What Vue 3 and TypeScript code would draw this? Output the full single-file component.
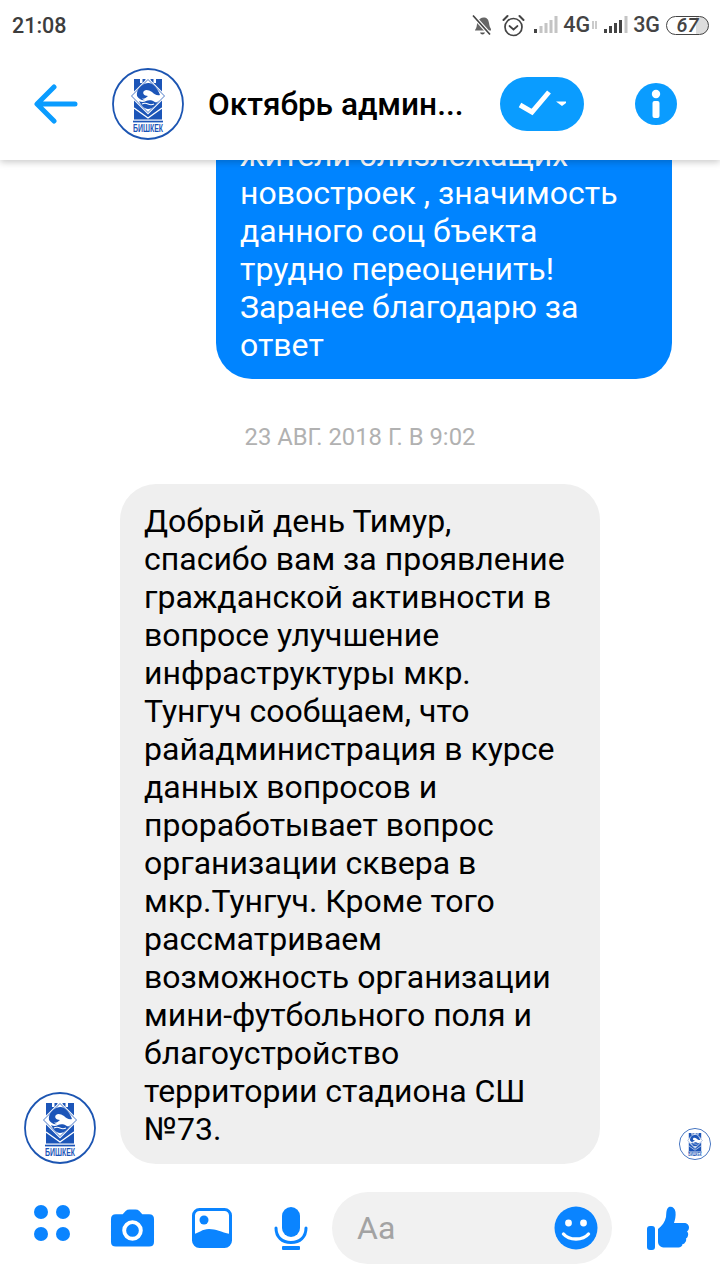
<template>
  <div class="screen">
    <header class="top">
      <div class="status">
        <span class="time">21:08</span>
        <div class="status-icons">
          <svg class="st bell" width="24" height="23" viewBox="0 0 24 23" fill="none">
            <path d="M5 16c2-2 1.500-5 2.500-8S12 3 14.500 3.500c3.500.7 4 3 4.500 5.500.3 2.500 1 4.500 2 6v1.500H5z" fill="#666" />
            <path d="M10 18.500a2.600 2.600 0 0 0 5 0z" fill="#555" />
            <path d="M3 1.500l17 19" stroke="#fff" stroke-width="4" />
            <path d="M3 1.500l17 19" stroke="#444" stroke-width="1.700" />
          </svg>
          <svg class="st alarm" width="23" height="23" viewBox="0 0 23 23" fill="none" stroke="#444" stroke-width="1.700">
            <circle cx="11.500" cy="13" r="8.500" />
            <path d="M7.500 12l4 3.500 4-3.500" stroke-linecap="round" />
            <path d="M1.500 6l4-4M21.500 6l-4-4" stroke-width="2" stroke-linecap="round" />
          </svg>
          <svg class="st sig1" width="26" height="20" viewBox="0 0 26 20">
            <rect x="1" y="14" width="3" height="4" fill="#444" />
            <rect x="6.500" y="11" width="3" height="7" fill="#c4c4c4" />
            <rect x="11.500" y="8" width="3" height="10" fill="#c4c4c4" />
            <rect x="16.500" y="5" width="3" height="13" fill="#c4c4c4" />
            <rect x="21.500" y="1" width="3" height="17" fill="#c4c4c4" />
          </svg>
          <span class="net n4g">4G</span>
          <svg class="st arrows" width="7" height="10" viewBox="0 0 7 10">
            <path d="M2 1v8M5 1v8" stroke="#bbb" stroke-width="1.500" />
          </svg>
          <svg class="st sig2" width="26" height="20" viewBox="0 0 26 20">
            <rect x="1" y="14" width="3" height="4" fill="#444" />
            <rect x="6" y="11" width="3" height="7" fill="#444" />
            <rect x="11" y="8" width="3" height="10" fill="#444" />
            <rect x="16" y="5" width="3" height="13" fill="#444" />
            <rect x="21.500" y="1" width="3" height="17" fill="#c4c4c4" />
          </svg>
          <span class="net n3g">3G</span>
          <div class="battery"><span class="batt-num">67</span></div>
        </div>
      </div>
      <div class="bar">
        <svg class="back" width="44" height="40" viewBox="0 0 44 40" fill="none" stroke="#0a9cff" stroke-width="5" stroke-linecap="round" stroke-linejoin="round">
          <path d="M20 3L3 20l17 17M4 20h37" />
        </svg>
        <svg class="avatar" width="72" height="72" viewBox="0 0 72 72">
          <symbol id="bishkek-logo" viewBox="0 0 72 72">
            <circle cx="36" cy="36" r="35" fill="#fff" stroke="#1c55b2" stroke-width="1.800" />
            <path d="M22 11h6v4h2.500v-4h3v4h5v-4h3v4h2.500v-4h6v40.500h-28z" fill="#1c55b8" />
            <path d="M36 9.500L54.500 28 36 46.500 17.500 28z" fill="#fff" />
            <path d="M36 11.500L52.500 28 36 44.500 19.500 28z" fill="none" stroke="#1c55b8" stroke-width=".8" />
            <path d="M25 28c-1-6 4-12 11-13 5-.5 10 6 12 12-3 1-6-1-8-3-3-2-6-3-8-1s0 5 4 5c-2 2-4 3-6 2.500 1 1 2 1.500 3 1.500-3 1-6-1-8-4z" fill="#1c55b8" />
            <path d="M27 33c3 1.500 5 1 7 0s6-1 8 .5 3.500 1 5-1.500c-2 4-6 9-11 9-4 0-7-4-9-8z" fill="#1c55b8" />
            <path d="M30 36c2-1 4-1 6 0s4 1 6 0" fill="none" stroke="#fff" stroke-width="1.200" />
            <path d="M22 40L36 50l14-10" fill="none" stroke="#fff" stroke-width="1.400" />
            <rect x="21" y="52.700" width="30" height="1.700" fill="#1c55b8" />
            <text x="21" y="63.500" class="logo-text" textLength="30" lengthAdjust="spacingAndGlyphs">БИШКЕК</text>
          </symbol>
          <use href="#bishkek-logo" />
        </svg>
        <span class="title">Октябрь админ...</span>
        <div class="pill">
          <svg width="48" height="30" viewBox="0 0 48 30" fill="none">
            <path d="M2 16l12 7L31 3" stroke="#fff" stroke-width="5" stroke-linejoin="miter" />
            <path d="M38 12.500h12l-6 4.500z" fill="#fff" />
          </svg>
        </div>
        <svg class="info" width="42" height="42" viewBox="0 0 42 42">
          <circle cx="21" cy="21" r="21" fill="#0a9cff" />
          <circle cx="21" cy="11" r="4.200" fill="#fff" />
          <rect x="17.500" y="18" width="7" height="17" rx="2" fill="#fff" />
        </svg>
      </div>
    </header>

    <main class="chat">
      <div class="bubble out">
        <p v-for="line in outgoing" :key="line">{{ line }}</p>
      </div>
      <div class="stamp">23 АВГ. 2018 Г. В 9:02</div>
      <div class="row">
        <svg class="sender" width="72" height="72" viewBox="0 0 72 72"><use href="#bishkek-logo" /></svg>
        <div class="bubble in">
          <p v-for="line in incoming" :key="line">{{ line }}</p>
        </div>
        <svg class="seen" width="32" height="32" viewBox="0 0 72 72"><use href="#bishkek-logo" /></svg>
      </div>
    </main>

    <footer class="composer">
      <svg class="tool apps" width="44" height="44" viewBox="0 0 44 44" fill="#0a84ff">
        <circle cx="7" cy="7" r="7" /><circle cx="29" cy="7" r="7" />
        <circle cx="7" cy="29" r="7" /><circle cx="29" cy="29" r="7" />
      </svg>
      <svg class="tool cam" width="45" height="40" viewBox="0 0 46 40">
        <path fill="#0a84ff" fill-rule="evenodd" d="M6 6h7l3-3.500Q17.500 1 20 1h6q2.500 0 4 1.500L33 6h7q5 0 5 5v23q0 5-5 5H6q-5 0-5-5V11q0-5 5-5zM23 12a10.500 10.500 0 1 0 0 21 10.500 10.500 0 0 0 0-21zM23 16a6.500 6.500 0 1 1 0 13 6.500 6.500 0 0 1 0-13z" />
      </svg>
      <svg class="tool pic" width="40" height="40" viewBox="0 0 40 40">
        <rect x="1.500" y="1.500" width="37" height="37" rx="6" fill="#fff" stroke="#0a84ff" stroke-width="3" />
        <circle cx="12" cy="12" r="4.500" fill="#0a84ff" />
        <path d="M2 26c5-1 8-5 15-5 7 0 12 3 21 5v8q0 5-5 5H7q-5 0-5-5z" fill="#0a84ff" />
      </svg>
      <svg class="tool mic" width="34" height="44" viewBox="0 0 34 44" fill="none">
        <rect x="8" y="0" width="18" height="30" rx="9" fill="#0a84ff" />
        <path d="M2 21c0 9 6 14.500 15 14.500S32 30 32 21" stroke="#0a84ff" stroke-width="3" stroke-linecap="round" />
        <rect x="8" y="39" width="18" height="4" rx="1" fill="#0a84ff" />
      </svg>
      <div class="input">
        <span class="placeholder">Aa</span>
        <svg width="44" height="44" viewBox="0 0 44 44">
          <circle cx="22" cy="22" r="21.500" fill="#0a84ff" />
          <circle cx="14.500" cy="17" r="3.400" fill="#fff" />
          <circle cx="29.500" cy="17" r="3.400" fill="#fff" />
          <path d="M9.500 28c3 3.500 7.500 5 12.500 5s9.500-1.500 12.500-5" fill="none" stroke="#fff" stroke-width="3.400" stroke-linecap="round" />
        </svg>
      </div>
      <svg class="tool thumb" width="44" height="46" viewBox="0 0 44 46" fill="#0a84ff">
        <rect x="1" y="21" width="8" height="24" rx="3" />
        <path d="M12 24c4-3 7-7 8-12 .5-4 0-8 3-10 3-1 6 1 6.500 5 .5 4-.5 8-1.500 11h10c3 0 5 2 5 4.500 0 2-1 3-2 4 1 1 1.500 2.500 1 4-.3 1.500-1 2.500-2 3 .5 1.500 0 3-1 4-.5 1-1.500 1.500-2.500 1.500 0 2-2 3.500-4 3.500H19c-4 0-7-2-7-6z" />
      </svg>
    </footer>
  </div>
</template>

<script setup lang="ts">
const outgoing: string[] = [
  "жители близлежащих",
  "новостроек , значимость",
  "данного соц бъекта",
  "трудно переоценить!",
  "Заранее благодарю за",
  "ответ",
];

const incoming: string[] = [
  "Добрый день Тимур,",
  "спасибо вам за проявление",
  "гражданской активности в",
  "вопросе улучшение",
  "инфраструктуры мкр.",
  "Тунгуч сообщаем, что",
  "райадминистрация в курсе",
  "данных вопросов и",
  "проработывает вопрос",
  "организации сквера в",
  "мкр.Тунгуч. Кроме того",
  "рассматриваем",
  "возможность организации",
  "мини-футбольного поля и",
  "благоустройство",
  "территории стадиона СШ",
  "№73.",
];
</script>

<style>
html,
body {
  margin: 0;
  background: #fff;
}
</style>

<style scoped>
.screen {
  width: 720px;
  height: 1280px;
  display: flex;
  flex-direction: column;
  overflow: hidden;
  background: #fff;
  font-family: Roboto, "Noto Sans", sans-serif;
}

.top {
  flex: none;
  height: 160px;
  background: #fff;
  box-shadow: 0 2px 7px rgba(0, 0, 0, 0.22);
  position: relative;
  z-index: 2;
}

.status {
  height: 50px;
  display: flex;
  align-items: center;
  justify-content: space-between;
  padding: 0 11px 0 12px;
}

.time {
  font-size: 21.5px;
  font-weight: 500;
  color: #3d3d3d;
}

.status-icons {
  display: flex;
  align-items: center;
}

.st {
  flex: none;
}

.alarm {
  margin-left: 8px;
}

.sig1 {
  margin-left: 8px;
}

.net {
  font-size: 21.5px;
  font-weight: 500;
  color: #444;
  line-height: 1;
}

.n4g {
  margin-left: 4px;
}

.arrows {
  margin-left: 1px;
}

.sig2 {
  margin-left: 5px;
}

.n3g {
  margin-left: 4px;
}

.battery {
  margin-left: 6px;
  width: 43px;
  height: 19px;
  box-sizing: border-box;
  border: 1.5px solid #444;
  border-radius: 10px;
  display: flex;
  align-items: center;
  justify-content: center;
  background: linear-gradient(90deg, #fff 70%, #ddd 70%);
}

.batt-num {
  font-size: 20px;
  font-weight: 500;
  font-style: italic;
  color: #444;
  line-height: 1;
}

.bar {
  height: 110px;
  display: flex;
  align-items: center;
  padding-bottom: 2px;
  box-sizing: border-box;
}

.back {
  margin-left: 34px;
  flex: none;
}

.avatar {
  margin-left: 34px;
  flex: none;
}

.title {
  margin-left: 24px;
  width: 292px;
  font-size: 31.6px;
  font-weight: 500;
  color: #000;
  white-space: nowrap;
}

.pill {
  width: 84px;
  height: 54px;
  flex: none;
  border-radius: 27px;
  background: #0a9cff;
  display: flex;
  align-items: center;
  justify-content: center;
}

.info {
  margin-left: 51px;
  flex: none;
}

.chat {
  flex: 1;
  min-height: 0;
  display: flex;
  flex-direction: column;
  justify-content: flex-end;
  overflow: hidden;
  padding-bottom: 16px;
}

.bubble {
  flex: none;
  box-sizing: border-box;
  border-radius: 36px;
  font-size: 32px;
  line-height: 38px;
}

.bubble p {
  margin: 0;
  white-space: nowrap;
}

.out {
  align-self: flex-end;
  width: 456px;
  margin-right: 48px;
  padding: 17px 24px 15px;
  background: #0084ff;
  color: #fff;
}

.stamp {
  flex: none;
  margin-top: 45px;
  margin-bottom: 34px;
  text-align: center;
  font-size: 23.8px;
  line-height: 26px;
  color: #b1b1b1;
}

.row {
  flex: none;
  display: flex;
  align-items: flex-end;
  padding-left: 24px;
}

.sender {
  flex: none;
}

.in {
  width: 480px;
  margin-left: 24px;
  padding: 18px 24px 16px;
  background: #efefef;
  color: #000;
}

.seen {
  flex: none;
  margin-left: 79px;
  margin-bottom: 4px;
}

.composer {
  flex: none;
  height: 100px;
  box-sizing: border-box;
  display: flex;
  align-items: flex-start;
  padding-top: 12px;
  position: relative;
}

.tool {
  flex: none;
}

.apps {
  margin: 13px 0 0 34px;
}

.cam {
  margin: 16px 0 0 32px;
}

.pic {
  margin: 16px 0 0 37px;
}

.mic {
  margin: 15px 0 0 42px;
}

.input {
  margin-left: 24px;
  width: 280px;
  height: 72px;
  flex: none;
  box-sizing: border-box;
  border-radius: 36px;
  background: #f1f1f1;
  display: flex;
  align-items: center;
  justify-content: space-between;
  padding: 0 14px 0 25px;
}

.placeholder {
  font-size: 32px;
  color: #a3a3a3;
}

.thumb {
  margin: 13px 0 0 34px;
}

.logo-text {
  font-family: "Liberation Sans", sans-serif;
  font-size: 10.5px;
  font-weight: 700;
  fill: #1c55b8;
}
</style>
